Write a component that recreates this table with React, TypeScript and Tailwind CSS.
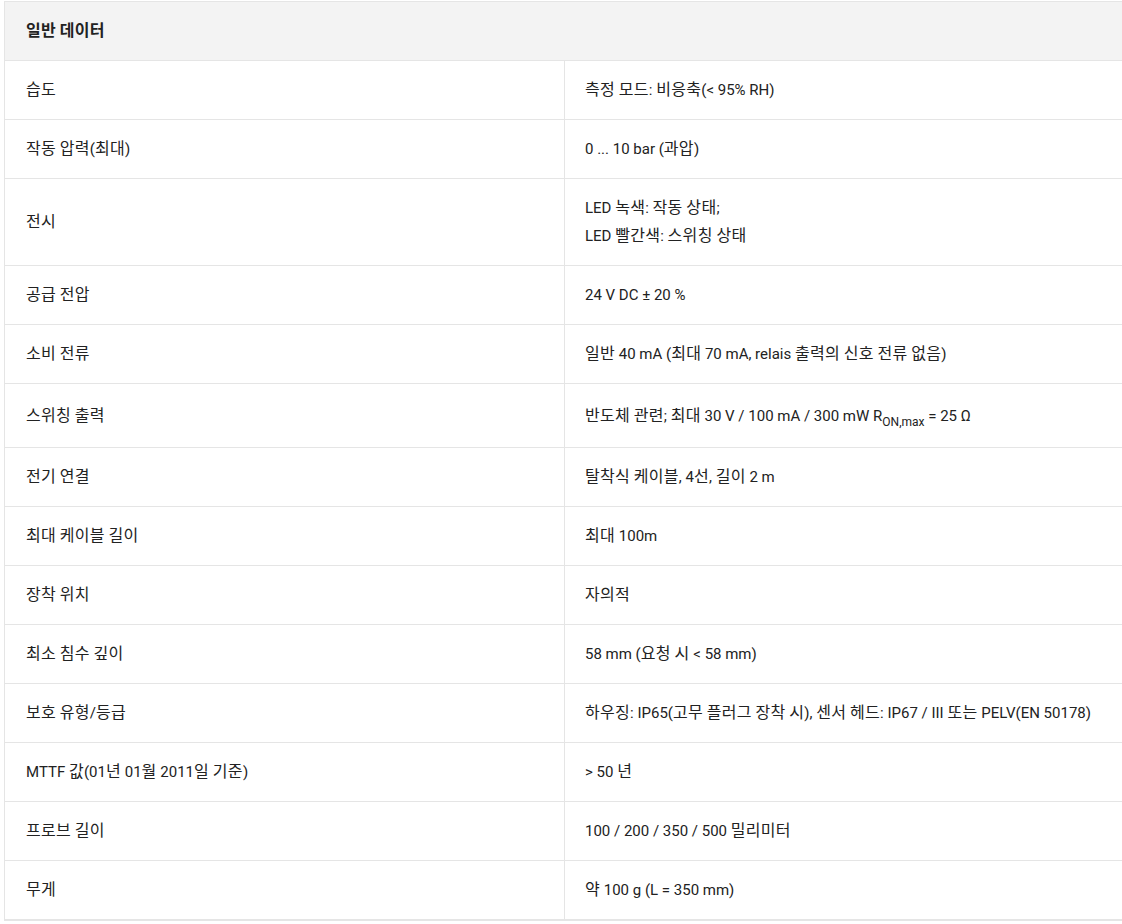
import React from 'react';

// Korean runs are set a touch larger so their width matches the original rendering
const K = ({ t }: { t: string }) => (
  <>
    {t.split(/([\uAC00-\uD7A3]+)/).map((part, i) =>
      /[\uAC00-\uD7A3]/.test(part) ? (
        <span key={i} className="text-[16px] tracking-[0.3px]">
          {part}
        </span>
      ) : (
        part
      )
    )}
  </>
);

type Row = { label: string; value: React.ReactNode; tall?: boolean };

const rows: Row[] = [
  { label: '습도', value: <K t="측정 모드: 비응축(< 95% RH)" /> },
  { label: '작동 압력(최대)', value: <K t="0 ... 10 bar (과압)" /> },
  {
    label: '전시',
    value: (
      <>
        <K t="LED 녹색: 작동 상태;" />
        <br />
        <K t="LED 빨간색: 스위칭 상태" />
      </>
    ),
  },
  { label: '공급 전압', value: '24 V DC ± 20 %' },
  { label: '소비 전류', value: <K t="일반 40 mA (최대 70 mA, relais 출력의 신호 전류 없음)" /> },
  {
    label: '스위칭 출력',
    tall: true,
    value: (
      <>
        <K t="반도체 관련; 최대 30 V / 100 mA / 300 mW R" />
        <span className="relative top-[5px] text-[12px] leading-none">ON,max</span> = 25 Ω
      </>
    ),
  },
  { label: '전기 연결', value: <K t="탈착식 케이블, 4선, 길이 2 m" /> },
  { label: '최대 케이블 길이', value: <K t="최대 100m" /> },
  { label: '장착 위치', value: <K t="자의적" /> },
  { label: '최소 침수 깊이', value: <K t="58 mm (요청 시 < 58 mm)" /> },
  { label: '보호 유형/등급', value: <K t="하우징: IP65(고무 플러그 장착 시), 센서 헤드: IP67 / III 또는 PELV(EN 50178)" /> },
  { label: 'MTTF 값(01년 01월 2011일 기준)', value: <K t="> 50 년" /> },
  { label: '프로브 길이', value: <K t="100 / 200 / 350 / 500 밀리미터" /> },
  { label: '무게', value: <K t="약 100 g (L = 350 mm)" /> },
];

export default function App() {
  return (
    <div className="w-full overflow-hidden bg-white pt-px font-['Roboto','Noto_Sans_CJK_KR',sans-serif] text-[15px] text-[#222]">
      <div className="ml-[4px] w-[1121px] border-l border-t border-b-2 border-[#e5e5e5]">
        <div className="flex h-[59px] items-center border-b border-[#e5e5e5] bg-[#f3f3f3] px-[21px] font-bold leading-[28px]">
          <div>
            <K t="일반 데이터" />
          </div>
        </div>
        {rows.map((row, i) => (
          <div
            key={row.label}
            className={`flex ${i < rows.length - 1 ? 'border-b border-[#e5e5e5]' : ''} ${row.tall ? 'min-h-[64px]' : ''}`}
          >
            <div className="flex w-[560px] shrink-0 items-center border-r border-[#e5e5e5] px-[21px] py-[15px] leading-[28px]">
              <div>
                <K t={row.label} />
              </div>
            </div>
            <div className="flex flex-1 items-center px-[20px] py-[15px] leading-[28px]">
              <div>{row.value}</div>
            </div>
          </div>
        ))}
      </div>
    </div>
  );
}
